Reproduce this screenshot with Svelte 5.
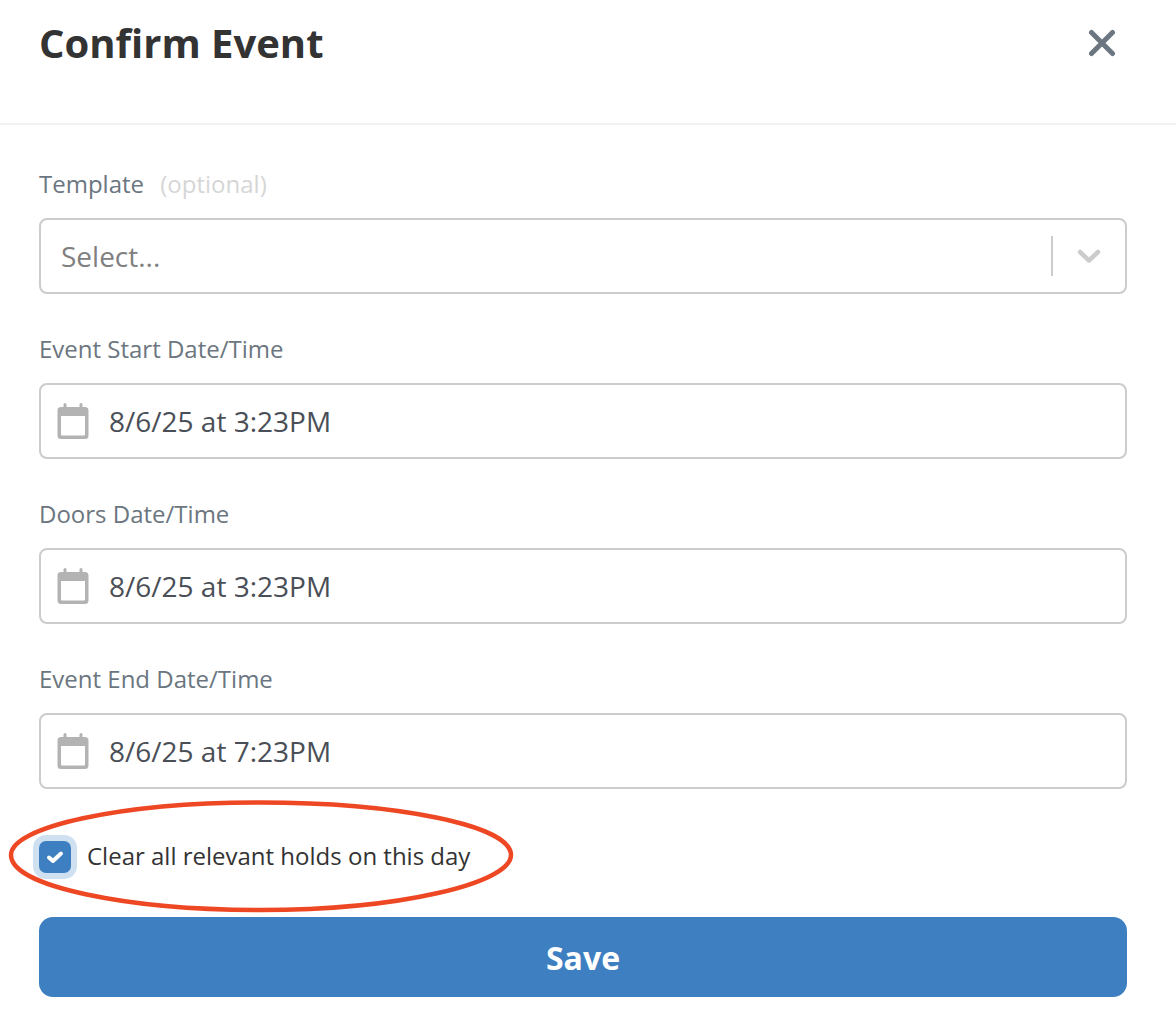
<script lang="ts">
	const dateFields = [
		{ label: 'Event Start Date/Time', value: '8/6/25 at 3:23PM' },
		{ label: 'Doors Date/Time', value: '8/6/25 at 3:23PM' },
		{ label: 'Event End Date/Time', value: '8/6/25 at 7:23PM' }
	];
</script>

<div class="modal">
	<header class="header">
		<h1>Confirm Event</h1>
		<button class="close" aria-label="Close">
			<svg width="28" height="28" viewBox="0 0 28 28">
				<path d="M3.5 3.5 L24.5 24.5 M24.5 3.5 L3.5 24.5" stroke="#6b7680" stroke-width="5" stroke-linecap="round" />
			</svg>
		</button>
	</header>

	<form class="body">
		<div class="field">
			<div class="label">Template <span class="optional">(optional)</span></div>
			<div class="box select">
				<span class="placeholder">Select...</span>
				<span class="sep"></span>
				<svg class="chevron" width="24" height="15" viewBox="0 0 24 15">
					<path d="M3 3 L12 11.5 L21 3" fill="none" stroke="#cccccc" stroke-width="4.5" stroke-linecap="round" stroke-linejoin="round" />
				</svg>
			</div>
		</div>

		{#each dateFields as field}
			<div class="field">
				<div class="label">{field.label}</div>
				<div class="box date">
					<svg class="cal" width="32" height="37" viewBox="0 0 32 37">
						<path d="M8 1.5 V6 M24 1.5 V6" stroke="#b3b3b3" stroke-width="3" stroke-linecap="round" />
						<path d="M4 4 H28 A3.5 3.5 0 0 1 31.5 7.5 V32.5 A3.5 3.5 0 0 1 28 36 H4 A3.5 3.5 0 0 1 0.5 32.5 V7.5 A3.5 3.5 0 0 1 4 4 Z M4 13 V31.5 A1 1 0 0 0 5 32.5 H27 A1 1 0 0 0 28 31.5 V13 Z" fill="#b3b3b3" fill-rule="evenodd" />
					</svg>
					<span class="value">{field.value}</span>
				</div>
			</div>
		{/each}

		<label class="check">
			<span class="tick">
				<svg width="18" height="14" viewBox="0 0 18 14">
					<path d="M3 7.5 L7 11 L15 3.5" fill="none" stroke="#fff" stroke-width="4" stroke-linecap="round" stroke-linejoin="round" />
				</svg>
			</span>
			<span class="check-text">Clear all relevant holds on this day</span>
		</label>

		<button class="save" type="button">Save</button>
	</form>

	<svg class="circle" width="530" height="125" viewBox="0 0 530 125">
		<path d="M260 7.5 C120 7.5 11 32 11 60 C11 92 130 115 260 115 C400 115 511 88 511 60 C511 30 395 7.5 260 7.5 Z" fill="none" stroke="#ee4724" stroke-width="4.5" />
	</svg>
</div>

<style>
	:global(body) {
		margin: 0;
		background: #fff;
	}

	.modal {
		position: relative;
		width: 1176px;
		height: 1010px;
		overflow: hidden;
		font-family: 'Open Sans', sans-serif;
		background: #fff;
	}

	.header {
		display: flex;
		align-items: flex-start;
		justify-content: space-between;
		height: 123px;
		padding: 0 60px 0 39px;
		border-bottom: 2px solid #f2f2f2;
	}

	h1 {
		margin: 16px 0 0;
		font-size: 40px;
		line-height: 54px;
		font-weight: 700;
		color: #333;
	}

	.close {
		display: flex;
		margin-top: 29px;
		padding: 0;
		background: none;
		border: none;
	}

	.body {
		display: flex;
		flex-direction: column;
		padding: 42px 49px 0 39px;
	}

	.field {
		margin-bottom: 38px;
	}

	.label {
		height: 34px;
		margin-bottom: 17px;
		font-size: 24px;
		line-height: 34px;
		color: #6b7680;
	}

	.optional {
		margin-left: 10px;
		color: #d6d6d6;
	}

	.box {
		display: flex;
		align-items: center;
		box-sizing: border-box;
		height: 76px;
		background: #fff;
		border: 2px solid #ccc;
		border-radius: 8px;
	}

	.select {
		padding: 0 24px 0 20px;
	}

	.placeholder {
		flex: 1;
		font-size: 28px;
		color: #808080;
	}

	.sep {
		width: 2px;
		height: 40px;
		margin-right: 24px;
		background: #ccc;
	}

	.chevron {
		display: block;
	}

	.date {
		padding-left: 16px;
	}

	.cal {
		flex: none;
		margin-right: 20px;
	}

	.value {
		font-size: 28px;
		color: #4a4f57;
	}

	.check {
		display: flex;
		align-items: center;
		gap: 16px;
		margin-top: 8px;
		height: 44px;
		font-size: 24px;
		color: #333;
	}

	.check-text {
		margin-top: -4px;
	}

	.tick {
		display: flex;
		align-items: center;
		justify-content: center;
		box-sizing: border-box;
		width: 32px;
		height: 32px;
		background: #3e7fc1;
		border-radius: 7px;
		box-shadow: 0 0 0 6px #cfe0f1;
	}

	.save {
		height: 80px;
		margin-top: 38px;
		font-family: inherit;
		font-size: 32px;
		font-weight: 700;
		color: #fff;
		background: #3e7fc1;
		border: none;
		border-radius: 14px;
	}

	.circle {
		position: absolute;
		left: 0;
		top: 795px;
		pointer-events: none;
	}
</style>
